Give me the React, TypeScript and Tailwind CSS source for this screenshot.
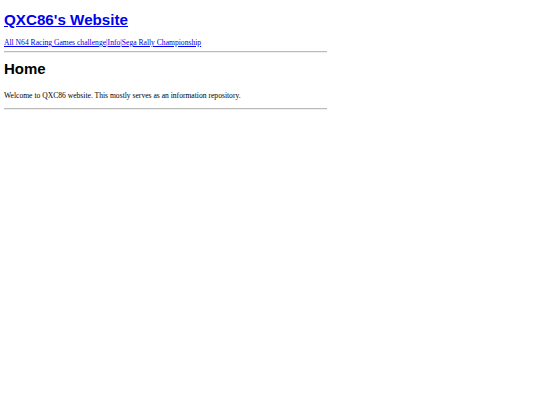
export default function App() {
  return (
    <div className="w-[540px] h-[405px] bg-white">
      <div className="w-[323px] ml-[4px] pt-[10px]">
        <h1 className="font-['Liberation_Sans',Arial,sans-serif] font-bold text-[15.2px] leading-[19px]">
          <a href="#" className="text-[#0000ee] underline">QXC86's Website</a>
        </h1>
        <nav className="mt-[9px] font-['Liberation_Serif','Times_New_Roman',serif] text-[7.6px] leading-[10px]">
          <a href="#" className="text-[#0000ee] underline">All N64 Racing Games challenge</a>
          <span className="text-[#0000ee]">|</span>
          <a href="#" className="text-[#0000ee] underline">Info</a>
          <span className="text-[#0000ee]">|</span>
          <a href="#" className="text-[#0000ee] underline">Sega Rally Championship</a>
        </nav>
        <div className="mt-[3px] h-[2px] border-t border-[#bbbbbb] border-b-[#eeeeee] border-b" />
        <h2 className="mt-[6px] font-['Liberation_Sans',Arial,sans-serif] font-bold text-[15px] leading-[19px] text-black">Home</h2>
        <p className="mt-[13px] font-['Liberation_Serif','Times_New_Roman',serif] text-[7.6px] leading-[10px] text-black">
          Welcome to QXC86 website. This mostly serves as an information repository.
        </p>
        <div className="mt-[7px] h-[2px] border-t border-[#bbbbbb] border-b-[#eeeeee] border-b" />
      </div>
    </div>
  );
}
